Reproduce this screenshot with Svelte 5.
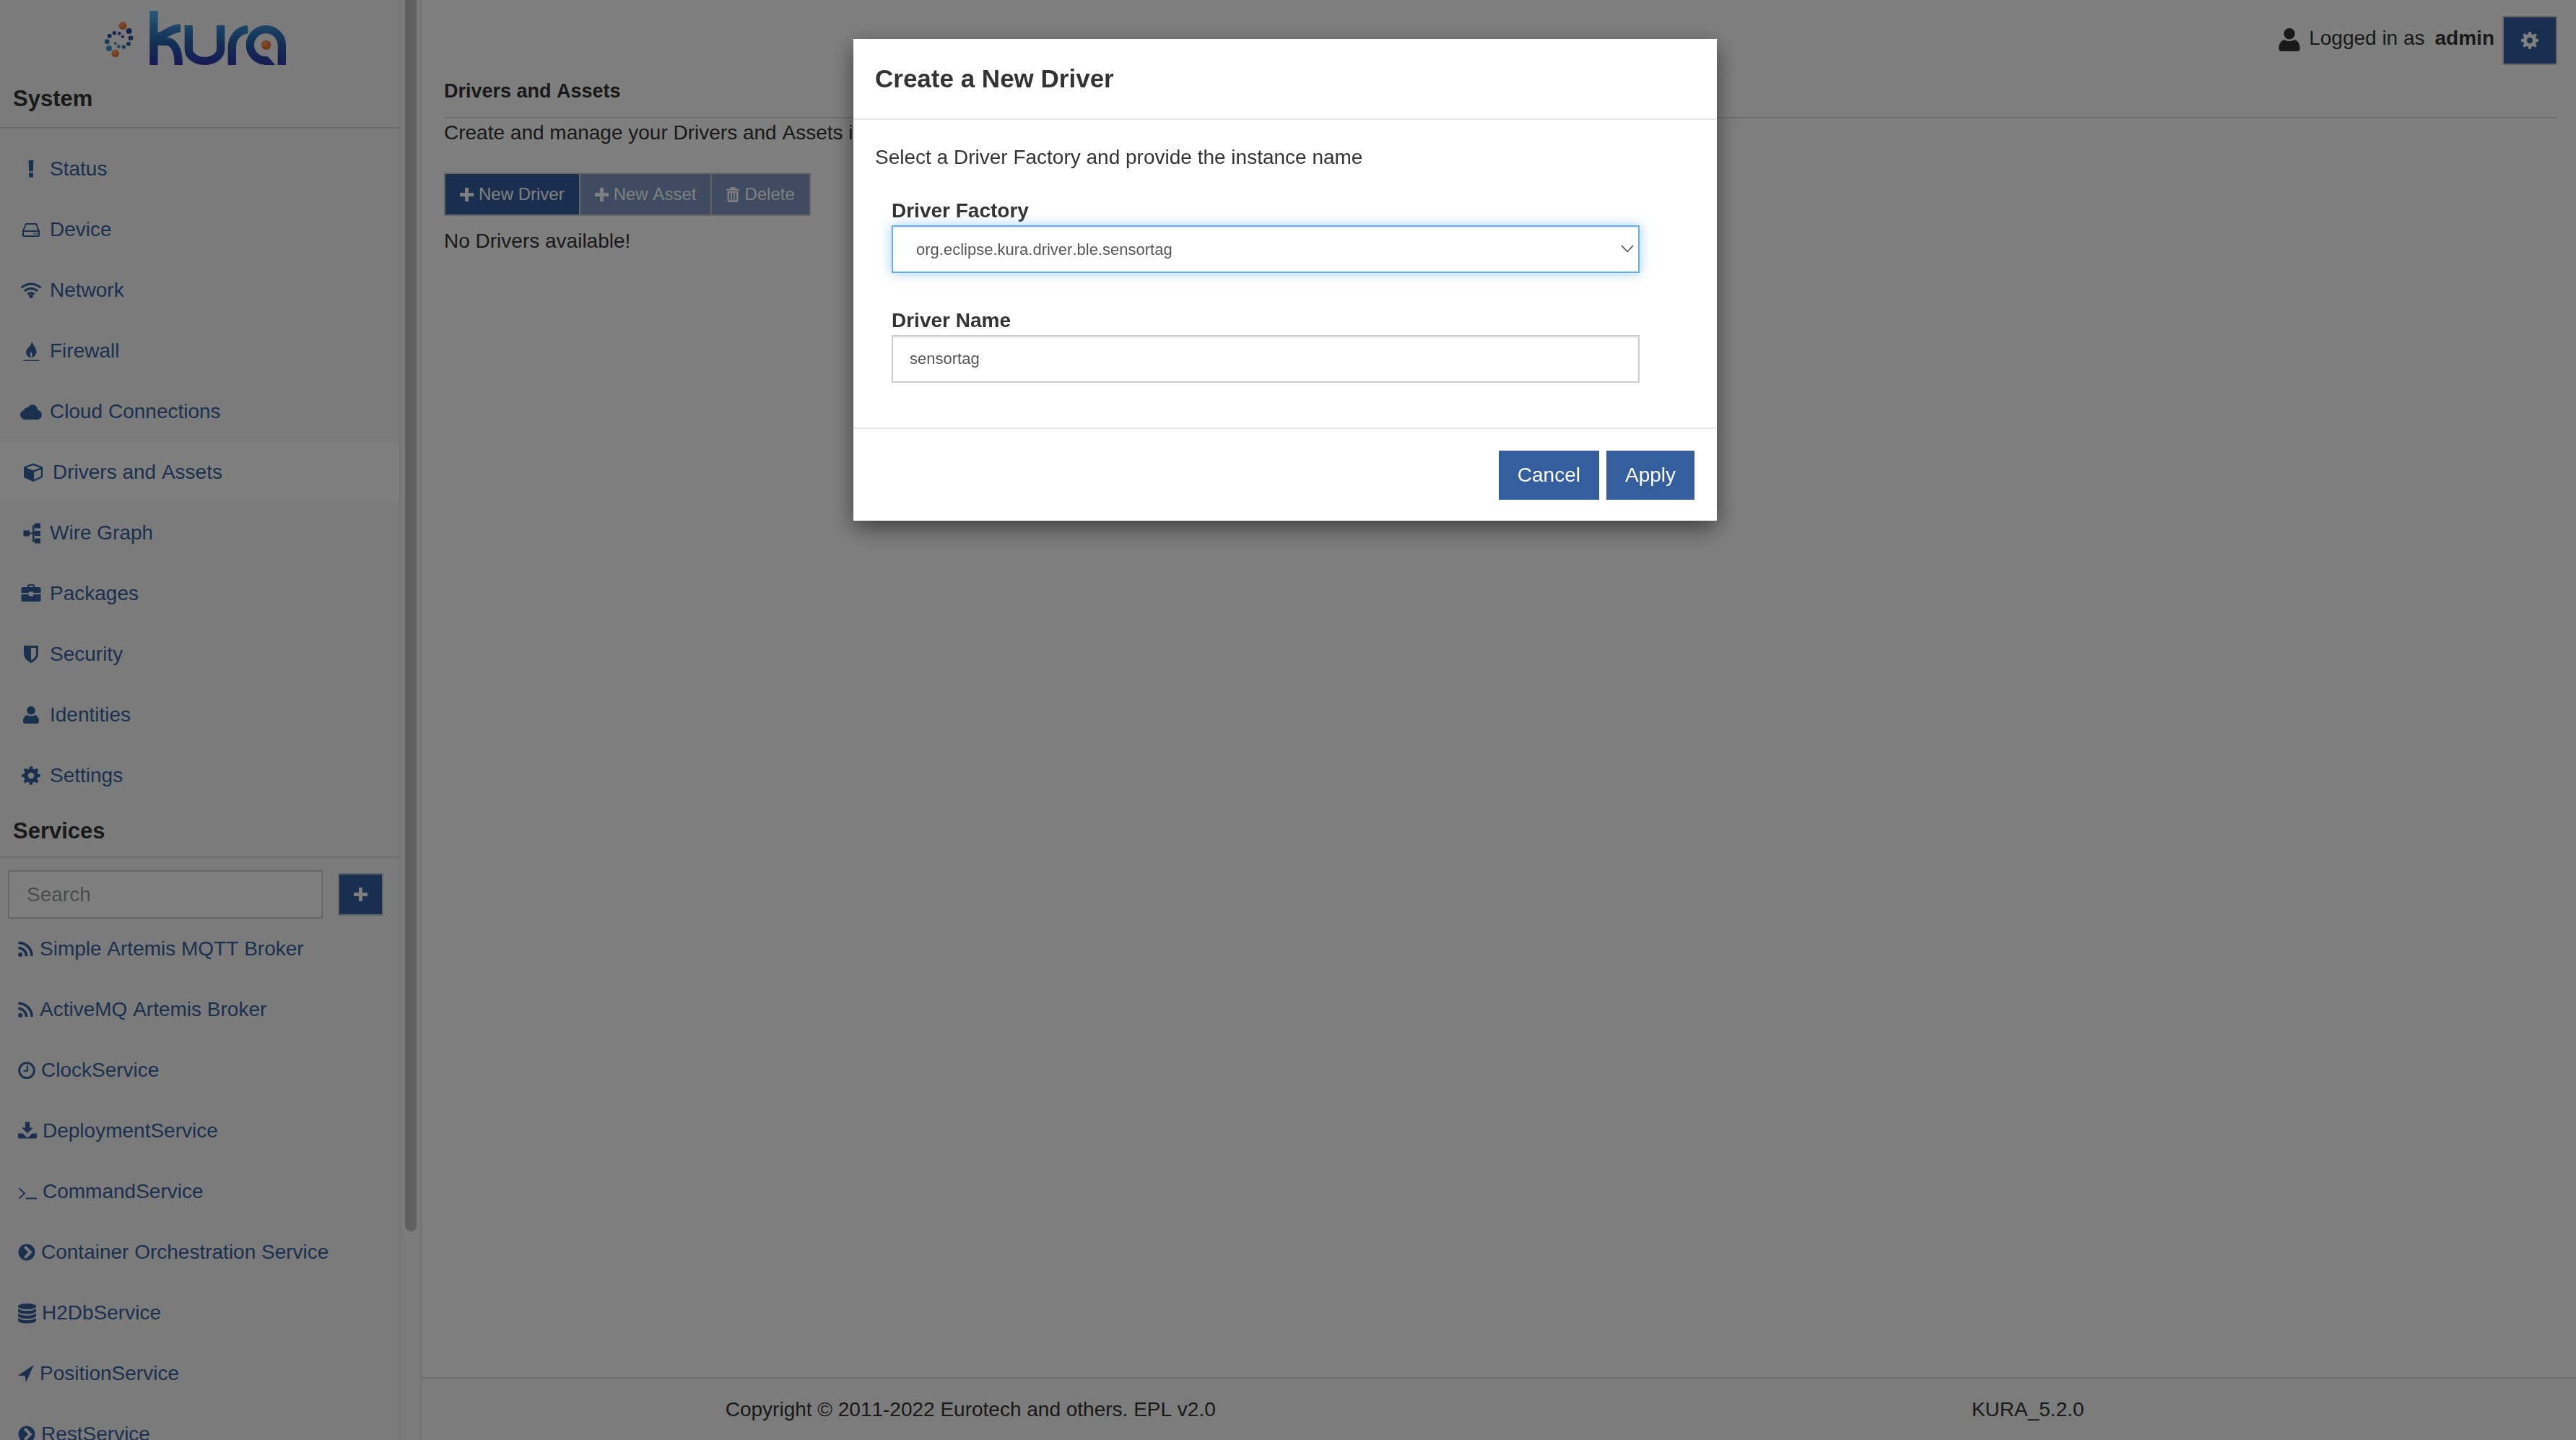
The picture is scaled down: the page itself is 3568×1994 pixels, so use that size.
<script>
  // one gear outline, used for Settings and for the header button
  function gear(c, R, r, hole) {
    let d = '';
    const teeth = 8;
    for (let i = 0; i < teeth; i++) {
      const a = (i / teeth) * Math.PI * 2;
      const step = Math.PI / teeth;
      const pts = [
        [r, a - step * 0.62],
        [R, a - step * 0.36],
        [R, a + step * 0.36],
        [r, a + step * 0.62]
      ];
      for (const [rad, ang] of pts) {
        const x = (c + rad * Math.cos(ang)).toFixed(2);
        const y = (c + rad * Math.sin(ang)).toFixed(2);
        d += (d ? 'L' : 'M') + x + ' ' + y;
      }
    }
    d += `Z M${c + hole} ${c} A${hole} ${hole} 0 1 0 ${c - hole} ${c} A${hole} ${hole} 0 1 0 ${c + hole} ${c}Z`;
    return d;
  }

  const chevronCircle =
    'M12 3.5a11.5 11.5 0 1 0 .01 0Z M8 8.8l2.8-2.8 9 9-9 9-2.8-2.8 6.2-6.2Z';

  const icons = {
    status: { w: 30, d: 'M11.5 3h7l-.8 15.500h-5.4Z M12 20.500h6v6h-6Z' },
    device: {
      w: 30,
      s: 'M4 17L8 7H22L26 17V23a1 1 0 0 1-1 1H5a1 1 0 0 1-1-1Z M4 17H26',
      d: 'M18.5 19.5h2v2h-2Z M22 19.5h2v2h-2Z',
      sw: 2
    },
    network: {
      w: 30,
      s: 'M1.5 11.5A20 20 0 0 1 28.5 11.5 M6 16A13.5 13.5 0 0 1 24 16 M10.5 20.5A7 7 0 0 1 19.5 20.5',
      d: 'M12 23.5a3 3 0 0 1 6 0l-3 3Z',
      sw: 3
    },
    firewall: {
      w: 30,
      d: 'M16.5 1.5C17 7 22.5 10 22.5 16C22.5 20 19.5 23 15.5 24.5C17 21.5 17 18.5 15 16C13.5 18 13.5 21 15 24.5C10.5 23.5 8 20.5 8 17C8 11.5 15 9 16.5 1.5Z M4.5 27.5h22v1.6h-22Z'
    },
    cloud: {
      w: 30,
      d: 'M7.5 26C3 26 0 23 0 19.5C0 16.5 2 14 5 13.3C5.5 10.5 8 9 10.5 9.5C12 6.5 15 5 18 5.5C21.5 6 24 9 24 12.5C27.5 13.5 30 16.5 30 19.5C30 23 27 26 23.5 26Z'
    },
    box: {
      w: 30,
      d: 'M15 2.5L28 7.5V22L15 28L2 22V7.5Z M15 5.2L24.5 8.8L15 12.4L5.5 8.8Z M16.2 14.5L25.8 11V20.6L16.2 25Z'
    },
    wire: {
      w: 30,
      d: 'M4.5 11.5h8.5v3h4V5.5c0-1 .5-1.5 1.5-1.5h1.5V1.5h8v7h-8V6.5h-.5v8h.5V12h8v7h-8v-2.5h-.5V25h.5v-2.5h8v7h-8v-2h-1.5c-1 0-1.5-.5-1.5-1.5V16.500h-4v3h-8.500Z'
    },
    packages: {
      w: 30,
      d: 'M1.500 8a2 2 0 0 1 2-2H10V4a2 2 0 0 1 2-2h6a2 2 0 0 1 2 2V6h6.500a2 2 0 0 1 2 2V14H18v-1.500H12V14H1.500Z M12 6h6V4h-6Z M1.500 16H12v2.500h6V16H28.500V24a2 2 0 0 1-2 2H3.500a2 2 0 0 1-2-2Z'
    },
    shield: {
      w: 30,
      d: 'M5 3H25V14C25 21 19 25 15 27C11 25 5 21 5 14Z M15 6H22V14C22 19 18 22 15 23.500Z'
    },
    user: {
      w: 30,
      d: 'M15 3a5.800 5.800 0 1 0 .01 0Z M4 24C4 18.500 7 15.500 10 15C12 17 18 17 20 15C23 15.500 26 18.500 26 24C26 26 25 27 23 27H7C5 27 4 26 4 24Z'
    },
    gear: { w: 30, d: gear(15, 13, 9.8, 4.3) },
    rss: {
      w: 22,
      s: 'M0.500 13.500A11 11 0 0 1 11.500 25 M0.500 6.500A18 18 0 0 1 19 25',
      d: 'M3.200 19.800a3.100 3.100 0 1 0 .01 0Z',
      sw: 3.6
    },
    clock: {
      w: 24,
      s: 'M12 5a10.300 10.300 0 1 0 .01 0Z',
      s2: 'M12.800 8.500V16H7.500',
      sw: 3
    },
    download: {
      w: 26,
      d: 'M10 2.500h6v8h5l-8 8-8-8h5Z M0 18.500h6.500l4.300 4.300a3 3 0 0 0 4.400 0l4.300-4.300H26V24a1.500 1.500 0 0 1-1.500 1.500h-23A1.500 1.500 0 0 1 0 24Z'
    },
    command: {
      w: 26,
      s: 'M1.500 10.500L9 17.500L1.500 24.500 M11 24.500H26.500',
      sw: 1.8
    },
    chevron: { w: 24, d: chevronCircle },
    database: {
      w: 25,
      d: 'M12.500 2C19 2 25 3.500 25 6C25 8.500 19 10 12.500 10C6 10 0 8.500 0 6C0 3.500 6 2 12.500 2Z M0 9C3 11.500 8 12.200 12.500 12.200C17 12.200 22 11.500 25 9V12.500C25 15 19 16.500 12.500 16.500C6 16.500 0 15 0 12.500Z M0 15.500C3 18 8 18.700 12.500 18.700C17 18.700 22 18 25 15.500V19C25 21.500 19 23 12.500 23C6 23 0 21.500 0 19Z M0 22C3 24.500 8 25.200 12.500 25.200C17 25.200 22 24.500 25 22V25.500C25 28 19 29.500 12.500 29.500C6 29.500 0 28 0 25.500Z'
    },
    location: { w: 22, d: 'M22 3L11 27L9.500 18.500L0 17.500Z' }
  };

  const systemItems = [
    { label: 'Status', icon: 'status' },
    { label: 'Device', icon: 'device' },
    { label: 'Network', icon: 'network' },
    { label: 'Firewall', icon: 'firewall' },
    { label: 'Cloud Connections', icon: 'cloud' },
    { label: 'Drivers and Assets', icon: 'box', active: true },
    { label: 'Wire Graph', icon: 'wire' },
    { label: 'Packages', icon: 'packages' },
    { label: 'Security', icon: 'shield' },
    { label: 'Identities', icon: 'user' },
    { label: 'Settings', icon: 'gear' }
  ];

  const services = [
    { label: 'Simple Artemis MQTT Broker', icon: 'rss' },
    { label: 'ActiveMQ Artemis Broker', icon: 'rss' },
    { label: 'ClockService', icon: 'clock' },
    { label: 'DeploymentService', icon: 'download' },
    { label: 'CommandService', icon: 'command' },
    { label: 'Container Orchestration Service', icon: 'chevron' },
    { label: 'H2DbService', icon: 'database' },
    { label: 'PositionService', icon: 'location' },
    { label: 'RestService', icon: 'chevron' }
  ];

  const dots = [
    [176, 129, 12, '#2f4a9c'], [183, 158, 10, '#2f4f9f'], [174, 182, 9, '#33649f'],
    [154, 195, 8, '#3a78b0'], [133, 193, 7, '#3f86bd'], [119, 180, 6, '#4088c0'],
    [150, 152, 6, '#2f4a9c'], [136, 139, 7, '#2f4a9c'], [115, 137, 8, '#2f4a9c'],
    [95, 149, 9, '#30509f'], [85, 173, 10, '#3a74ae'], [93, 201, 12, '#4490c8']
  ];
</script>

{#snippet icon(name, cls = '')}
  {@const ic = icons[name]}
  <svg class="icon {cls}" width={ic.w} height="30" viewBox="0 0 {ic.w} 30" aria-hidden="true">
    {#if ic.s}
      <path d={ic.s} fill="none" stroke="currentColor" stroke-width={ic.sw} />
    {/if}
    {#if ic.s2}
      <path d={ic.s2} fill="none" stroke="currentColor" stroke-width="2.2" />
    {/if}
    {#if ic.d}
      <path d={ic.d} fill="currentColor" fill-rule="evenodd" />
    {/if}
  </svg>
{/snippet}

{#snippet plus()}
  <svg width="19" height="19" viewBox="0 0 19 19" aria-hidden="true">
    <path d="M7 0h5v7h7v5h-7v7H7v-7H0V7h7Z" fill="currentColor" />
  </svg>
{/snippet}

<div class="page">
  <aside class="sidebar">
    <div class="logo">
      <svg width="300" height="110" viewBox="0 0 900 330" aria-label="kura logo">
        <defs>
          <linearGradient id="kura" gradientUnits="userSpaceOnUse" x1="0" y1="45" x2="0" y2="270">
            <stop offset="0" stop-color="#4ab0f4" />
            <stop offset="0.6" stop-color="#2560a8" />
            <stop offset="1" stop-color="#3034a8" />
          </linearGradient>
          <radialGradient id="ball" cx="0.4" cy="0.35" r="0.7">
            <stop offset="0" stop-color="#ffa070" />
            <stop offset="0.6" stop-color="#ee7a30" />
            <stop offset="1" stop-color="#d06a30" />
          </radialGradient>
        </defs>
        {#each dots as [cx, cy, r, fill]}
          <circle {cx} {cy} {r} {fill} />
        {/each}
        <circle cx="150" cy="107" r="16" fill="url(#ball)" />
        <circle cx="119" cy="222" r="15.500" fill="url(#ball)" />
        <g fill="none" stroke="url(#kura)" stroke-width="34">
          <path d="M279 45V270" />
          <path d="M390 117C345 117 325 152 290 152" />
          <path d="M290 172H330C365 172 382 210 382 270" />
          <path d="M424 105V205A66 48 0 0 0 557 205V105" />
          <path d="M604 270V195A70 73 0 0 1 670 122" />
          <path d="M811 270V187A66 65 0 1 0 745 252L772 282" />
        </g>
        <rect x="740" y="270" width="100" height="30" fill="#f7f7f7" />
        <circle cx="746" cy="187" r="20" fill="url(#ball)" />
      </svg>
    </div>

    <h2 class="section system">System</h2>
    <nav class="system-nav">
      {#each systemItems as item}
        <div class="nav-item" class:active={item.active}>
          {@render icon(item.icon)}
          <span>{item.label}</span>
        </div>
      {/each}
    </nav>

    <h2 class="section services">Services</h2>
    <div class="search-row">
      <input class="search" type="text" placeholder="Search" />
      <button class="add" type="button">{@render plus()}</button>
    </div>
    <div class="service-list">
      {#each services as item}
        <div class="service-item">
          {@render icon(item.icon)}
          <span>{item.label}</span>
        </div>
      {/each}
    </div>
  </aside>

  <div class="scroll-track"><div class="scroll-thumb"></div></div>

  <main class="main">
    <div class="content">
      <header class="topbar">
        <h1>Drivers and Assets</h1>
        <div class="account">
          <svg class="account-icon" width="30" height="32" viewBox="4 3 22 24" aria-hidden="true">
            <path d={icons.user.d} fill="currentColor" fill-rule="evenodd" />
          </svg>
          <span>Logged in as</span>
          <b>admin</b>
          <button class="gear-btn" type="button">
            <svg width="28" height="28" viewBox="0 0 30 30" aria-hidden="true">
              <path d={icons.gear.d} fill="currentColor" fill-rule="evenodd" />
            </svg>
          </button>
        </div>
      </header>
      <p class="lead">Create and manage your Drivers and Assets instances</p>
      <div class="btn-group">
        <button type="button" class="btn">{@render plus()}<span>New Driver</span></button>
        <button type="button" class="btn off">{@render plus()}<span>New Asset</span></button>
        <button type="button" class="btn off">
          <svg width="18" height="21" viewBox="0 0 18 21" aria-hidden="true">
            <path d="M6 0h6l1 2.500h5v2H0v-2h5Z M1.500 5.500h15V19a2 2 0 0 1-2 2h-11a2 2 0 0 1-2-2Z M4 8v10.500h2V8Z M8 8v10.500h2V8Z M12 8v10.500h2V8Z" fill="currentColor" fill-rule="evenodd" />
          </svg>
          <span>Delete</span>
        </button>
      </div>
      <p class="empty">No Drivers available!</p>
    </div>

    <footer class="footer">
      <span>Copyright © 2011-2022 Eurotech and others. EPL v2.0</span>
      <span>KURA_5.2.0</span>
    </footer>
  </main>
</div>

<div class="backdrop"></div>

<div class="modal">
  <div class="modal-head"><h3>Create a New Driver</h3></div>
  <div class="modal-body">
    <p>Select a Driver Factory and provide the instance name</p>
    <div class="field">
      <label for="factory">Driver Factory</label>
      <div class="select-wrap">
        <select id="factory">
          <option>org.eclipse.kura.driver.ble.sensortag</option>
        </select>
        <svg class="caret" width="18" height="11" viewBox="0 0 18 11" aria-hidden="true">
          <path d="M1 1l8 8.500L17 1" fill="none" stroke="#555" stroke-width="1.800" />
        </svg>
      </div>
    </div>
    <div class="field name">
      <label for="name">Driver Name</label>
      <input id="name" type="text" value="sensortag" />
    </div>
  </div>
  <div class="modal-foot">
    <button type="button" class="primary">Cancel</button>
    <button type="button" class="primary">Apply</button>
  </div>
</div>

<style>
  :global(body) {
    margin: 0;
    background: #fff;
    overflow: hidden;
    font-family: "Liberation Sans", Arial, sans-serif;
    font-size: 28px;
    font-kerning: none;
    color: #333;
  }

  .page {
    display: flex;
    height: 100vh;
    overflow: hidden;
  }

  .sidebar {
    width: 553px;
    flex: none;
    background: #f7f7f7;
    border-right: 2px solid #e6e6e6;
    overflow: hidden;
    box-sizing: content-box;
  }

  .logo {
    height: 96px;
    display: flex;
    align-items: flex-start;
    padding-left: 120px;
  }

  .section {
    margin: 0;
    padding-left: 18px;
    font-size: 31px;
    font-weight: 700;
    color: #333;
    border-bottom: 2px solid #ddd;
    box-sizing: border-box;
  }

  .section.system {
    height: 82px;
    line-height: 82px;
  }

  .section.services {
    height: 72px;
    line-height: 70px;
  }

  .system-nav {
    padding-top: 14px;
  }

  .nav-item {
    height: 84px;
    display: flex;
    align-items: center;
    gap: 11px;
    padding-left: 28px;
    color: #36609f;
    box-sizing: border-box;
    border-top: 2px solid transparent;
    border-bottom: 2px solid transparent;
    background-clip: padding-box;
  }

  .nav-item.active {
    background-color: #fff;
    padding-left: 31px;
    gap: 12px;
  }

  .search-row {
    display: flex;
    align-items: flex-start;
    height: 82px;
    padding: 17px 0 0 11px;
    box-sizing: border-box;
  }

  .search {
    width: 436px;
    height: 67px;
    box-sizing: border-box;
    border: 2px solid #ccc;
    background: #fff;
    padding: 0 24px;
    font: inherit;
    color: #555;
    outline: none;
  }

  .search::placeholder {
    color: #999;
    opacity: 1;
  }

  .add {
    width: 63px;
    height: 59px;
    margin: 4px 0 0 21px;
    border: 2px solid #ccc;
    background: #355e9f;
    color: #fff;
    padding: 0;
    display: flex;
    align-items: center;
    justify-content: center;
  }

  .service-list {
    margin-top: 2px;
  }

  .service-item {
    height: 84px;
    display: flex;
    align-items: center;
    gap: 8px;
    padding-left: 25px;
    color: #36609f;
  }

  .icon {
    flex: none;
  }

  .scroll-track {
    width: 29px;
    flex: none;
    background: #f7f7f7;
    border-right: 2px solid #e6e6e6;
    padding-left: 6px;
    box-sizing: border-box;
  }

  .scroll-thumb {
    width: 16px;
    height: 1705px;
    background: #c1c1c1;
    border-radius: 0 0 8px 8px;
  }

  .main {
    flex: 1;
    min-width: 0;
    display: flex;
    flex-direction: column;
  }

  .content {
    flex: 1;
    padding: 0 26px 0 31px;
  }

  .topbar {
    height: 162px;
    border-bottom: 2px solid #ddd;
    box-sizing: content-box;
    display: flex;
    align-items: flex-start;
    justify-content: space-between;
  }

  .topbar h1 {
    margin: 107px 0 0;
    font-size: 27px;
    line-height: 38px;
    font-weight: 700;
    color: #333;
  }

  .account {
    display: flex;
    align-items: flex-start;
    padding-top: 22px;
    height: 68px;
    line-height: 62px;
    color: #333;
  }

  .account-icon {
    margin: 17px 12px 0 0;
  }

  .account b {
    margin-left: 14px;
  }

  .gear-btn {
    width: 76px;
    height: 68px;
    margin-left: 11px;
    border: 2px solid #ccc;
    background: #355e9f;
    color: #fff;
    padding: 0;
    display: flex;
    align-items: center;
    justify-content: center;
  }

  .lead {
    margin: 1px 0 0;
    line-height: 38px;
  }

  .btn-group {
    display: flex;
    margin-top: 36px;
    height: 60px;
  }

  .btn {
    height: 60px;
    display: flex;
    align-items: center;
    gap: 7px;
    padding: 0 20px;
    margin-left: -2px;
    border: 2px solid #ccc;
    background: #355e9f;
    color: #fff;
    font: inherit;
    font-size: 24px;
  }

  .btn:first-child {
    margin-left: 0;
  }

  .btn.off {
    background: #7c97c0;
    color: #fff;
  }

  .empty {
    margin: 16px 0 0;
    line-height: 38px;
  }

  .footer {
    height: 85px;
    display: grid;
    grid-template-columns: 1fr 1fr;
    align-items: center;
    text-align: center;
    padding: 0 27px 0 28px;
    background: #f8f8f8;
    border-top: 2px solid #ddd;
    box-sizing: content-box;
  }

  .backdrop {
    position: fixed;
    inset: 0;
    background: rgba(0, 0, 0, 0.5);
  }

  .modal {
    position: fixed;
    left: 1182px;
    top: 54px;
    width: 1196px;
    height: 667px;
    background: #fff;
    box-shadow: 0 10px 30px rgba(0, 0, 0, 0.5);
    display: flex;
    flex-direction: column;
  }

  .modal-head {
    height: 112px;
    border-bottom: 2px solid #e5e5e5;
    box-sizing: border-box;
    padding-left: 30px;
    display: flex;
    align-items: center;
  }

  .modal-head h3 {
    margin: 0;
    font-size: 35px;
    font-weight: 700;
    color: #333;
  }

  .modal-body {
    flex: 1;
    padding: 32px 30px 0;
  }

  .modal-body p {
    margin: 0 0 34px;
    line-height: 40px;
  }

  .field {
    padding-left: 23px;
    width: 1036px;
  }

  .field label {
    display: block;
    font-weight: 700;
    line-height: 40px;
  }

  .field.name {
    margin-top: 46px;
  }

  .select-wrap {
    position: relative;
  }

  select,
  input#name {
    display: block;
    width: 1036px;
    height: 66px;
    box-sizing: border-box;
    background: #fff;
    font-family: inherit;
    font-size: 22px;
    font-kerning: none;
    color: #555;
    outline: none;
  }

  select {
    appearance: none;
    border: 2px solid #66afe9;
    box-shadow: inset 0 2px 2px rgba(0, 0, 0, 0.075), 0 0 16px rgba(102, 175, 233, 0.6);
    padding: 0 0 0 32px;
    border-radius: 0;
  }

  input#name {
    border: 2px solid #ccc;
    box-shadow: inset 0 2px 2px rgba(0, 0, 0, 0.075);
    padding: 0 23px;
  }

  .caret {
    position: absolute;
    right: 8px;
    top: 27px;
  }

  .modal-foot {
    height: 129px;
    border-top: 2px solid #e5e5e5;
    box-sizing: border-box;
    display: flex;
    justify-content: flex-end;
    gap: 10px;
    padding: 30px 31px 0 0;
  }

  .primary {
    height: 68px;
    padding: 0 26px;
    border: none;
    background: #355e9f;
    color: #fff;
    font: inherit;
  }
</style>
